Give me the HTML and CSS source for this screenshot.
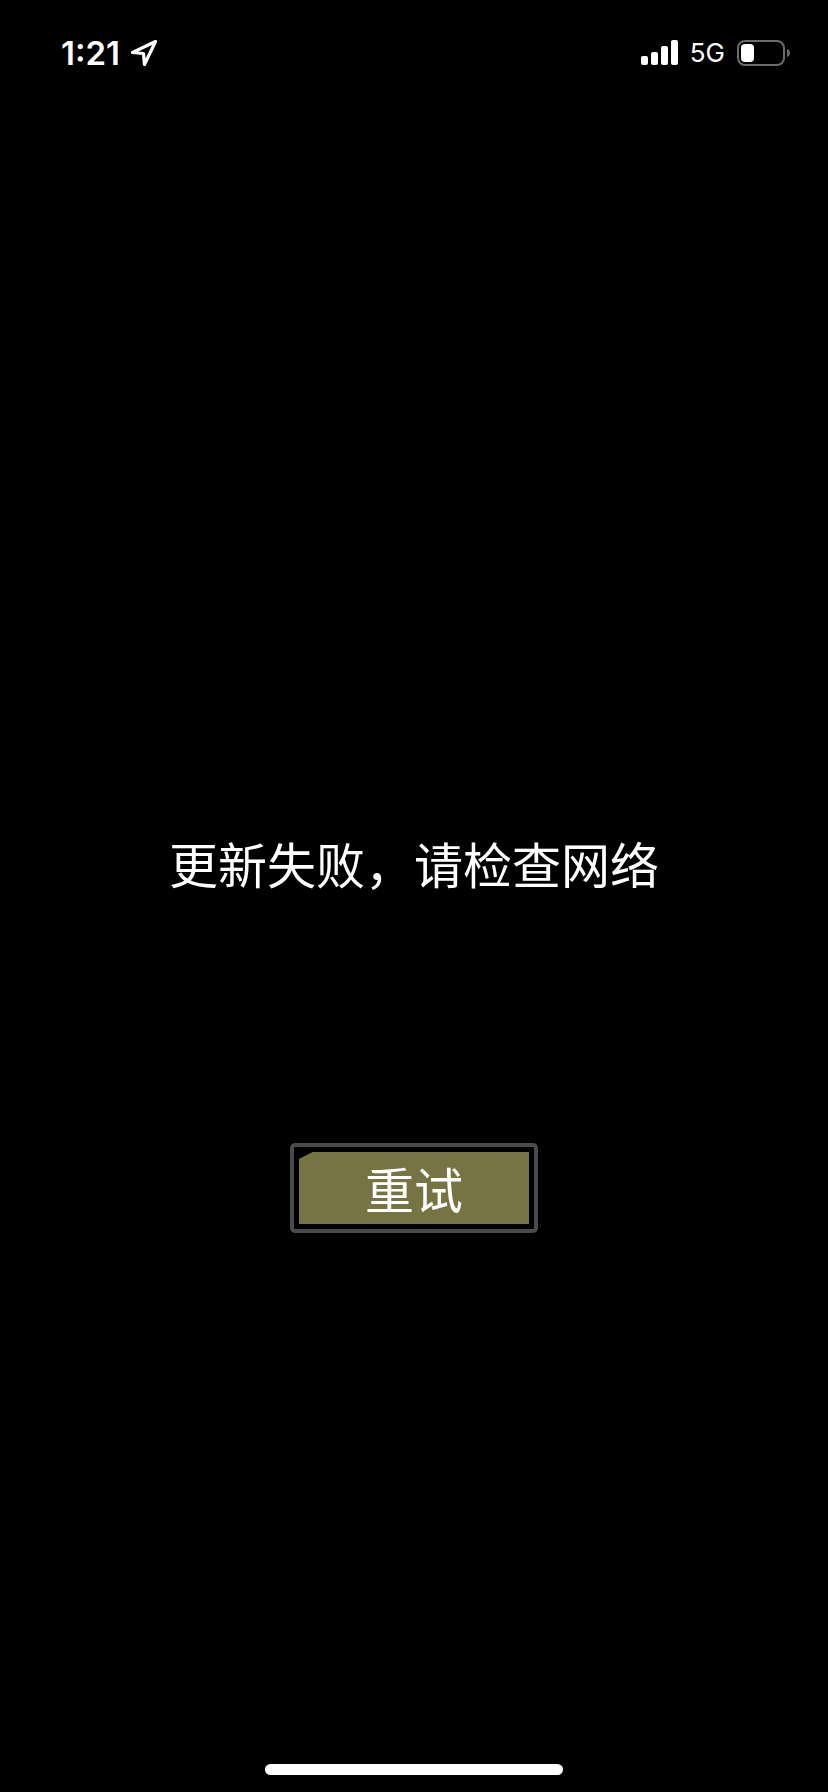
FILE: index.html
```html
<!DOCTYPE html>
<html lang="zh-CN">
<head>
  <meta charset="UTF-8">
  <meta name="viewport" content="width=device-width, initial-scale=1.0">
  <title>更新失败</title>
  <link rel="stylesheet" href="styles.css">
</head>
<body>
  <header class="status-bar">
    <div class="status-left">
      <span class="time">1:21</span>
      <svg class="location" width="28" height="28" viewBox="0 0 28 28" aria-hidden="true">
        <path d="M25.5 2.5 L2.5 13.5 L13.5 14.5 L14.5 25.5 Z" fill="none" stroke="#fff" stroke-width="3.2" stroke-linejoin="round"/>
      </svg>
    </div>
    <div class="status-right">
      <svg class="signal" width="37" height="25" viewBox="0 0 37 25" aria-hidden="true">
        <rect x="0" y="16" width="7" height="9" rx="2" fill="#fff"/>
        <rect x="10" y="12" width="7" height="13" rx="2" fill="#fff"/>
        <rect x="20" y="6" width="7" height="19" rx="2" fill="#fff"/>
        <rect x="30" y="0" width="7" height="25" rx="2" fill="#fff"/>
      </svg>
      <span class="network">5G</span>
      <svg class="battery" width="54" height="26" viewBox="0 0 54 26" aria-hidden="true">
        <rect x="1" y="1" width="46" height="24" rx="7" fill="none" stroke="#6b6b6b" stroke-width="2"/>
        <rect x="4" y="4" width="13" height="18" rx="4" fill="#fff"/>
        <path d="M50 9 C54 10 54 16 50 17 Z" fill="#6b6b6b"/>
      </svg>
    </div>
  </header>

  <main class="content">
    <p class="message">更新失败，请检查网络</p>
    <button class="retry-btn" type="button"><span class="retry-label">重试</span></button>
  </main>

  <footer class="home-area">
    <div class="home-indicator"></div>
  </footer>
</body>
</html>
```

FILE: styles.css
```css
* {
  box-sizing: border-box;
}
body {
  margin: 0;
  min-height: 100vh;
  display: flex;
  flex-direction: column;
  background-color: #000;
  color: #fff;
  font-family: "Noto Sans CJK SC", sans-serif;
}
.status-bar {
  display: flex;
  justify-content: space-between;
  align-items: center;
  height: 105px;
  padding: 0 37px 0 61px;
  font-family: Inter, sans-serif;
}
.status-left,
.status-right {
  display: flex;
  align-items: center;
}
.status-left {
  gap: 10px;
}
.status-right {
  gap: 12px;
}
.time {
  font-size: 33px;
  font-weight: 600;
}
.network {
  font-size: 26px;
}
.content {
  flex: 1;
  display: flex;
  flex-direction: column;
  align-items: center;
  justify-content: center;
  padding-top: 324px;
  padding-bottom: 132px;
}
.message {
  margin: 0 0 245px;
  font-size: 49px;
  font-weight: 400;
  line-height: 70px;
  text-align: center;
}
.retry-btn {
  width: 30%;
  min-width: 200px;
  padding: 5px;
  background-color: #000;
  color: #fff;
  border: 4px solid #4a4a4a;
  border-radius: 5px;
  font-family: inherit;
  font-size: 49px;
  font-weight: 400;
  line-height: 72px;
  cursor: pointer;
}
.retry-label {
  display: block;
  background-color: #757442;
  /* cut top left corner */
  clip-path: polygon(0 7px, 14px 0, 100% 0, 100% 100%, 0 100%);
}
.home-area {
  display: flex;
  justify-content: center;
  padding-bottom: 17px;
}
.home-indicator {
  width: 36%;
  height: 11px;
  border-radius: 6px;
  background-color: #fff;
}
```
